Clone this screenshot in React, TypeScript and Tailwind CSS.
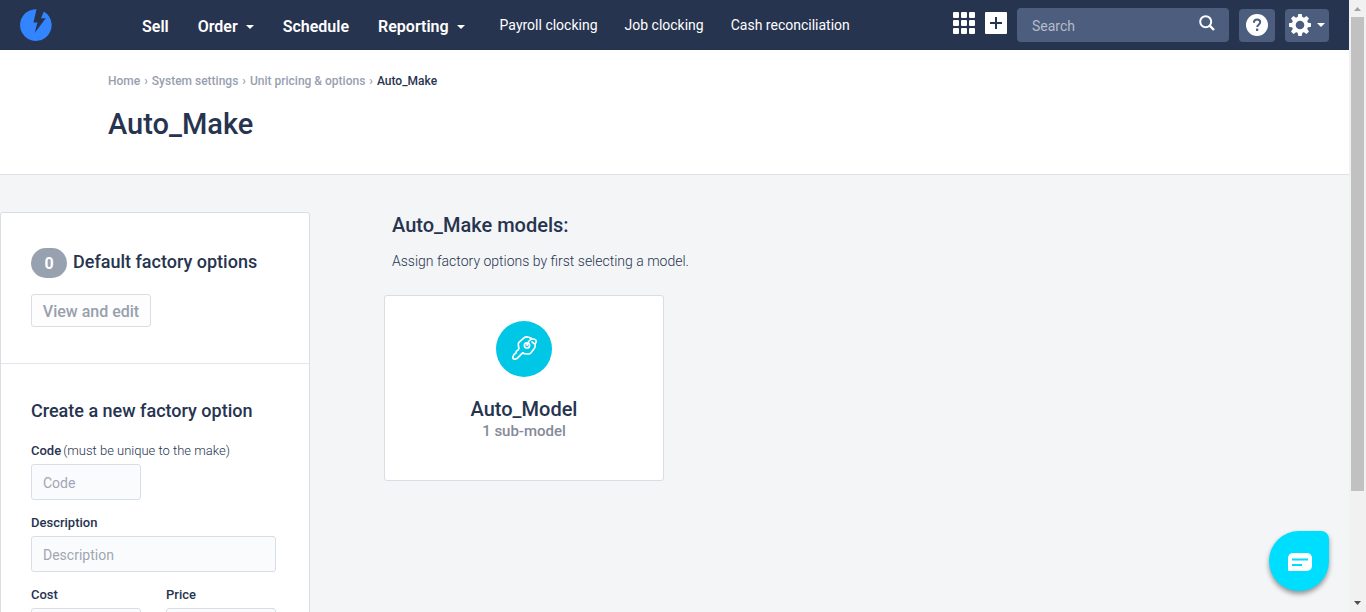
import type { ReactNode } from 'react';

function Caret() {
  return (
    <svg viewBox="0 0 8 4" className="h-1 w-2" fill="currentColor" aria-hidden="true">
      <path d="M0 0h8L4 4z" />
    </svg>
  );
}

function Logo() {
  return (
    <svg viewBox="0 0 32 32" className="size-8" aria-hidden="true">
      <path
        fill="#3384ff"
        d="M16.5.3 13.5 13.4h4L14.6 24 25.8 9.3h-4.8l2.9-6.8A15.8 15.8 0 1 1 16.5.3z"
      />
    </svg>
  );
}

function KeyIcon() {
  return (
    <svg
      viewBox="0 0 28 28"
      className="size-7"
      fill="none"
      stroke="#fff"
      strokeWidth="1.7"
      strokeLinejoin="round"
      strokeLinecap="round"
      aria-hidden="true"
    >
      <path d="M21.4 3.4 18.6 2.2Q16 1.2 14 2.9L9.4 6.9Q8 8.2 8.3 10L8.9 13.4 8.2 14.9 6.4 16.1 5.9 18 3.8 19.7 2.9 22Q2.6 24.4 5 24.2L7.2 23.4 12.6 17.9 14.4 18.6 18 19Q19.8 19.1 21 17.7L24.6 12.9Q25.6 11.4 25.2 9.4" />
      <circle cx="17" cy="10.4" r="2.6" />
      <path d="M17 10.2C17.8 6.4 20.6 3.8 23.6 4 26.6 4.4 27 7 25.2 8.6" />
      <path d="M22 6.8 24 8.6" />
    </svg>
  );
}

function MenuLink({ children, caret }: { children: ReactNode; caret?: boolean }) {
  return (
    <a href="#" className="flex items-center gap-2 text-base leading-5 font-semibold">
      {children}
      {caret && <Caret />}
    </a>
  );
}

function TopBar() {
  return (
    <header className="flex h-[50px] shrink-0 items-center bg-[#27344f] px-5 text-white">
      <a href="#" aria-label="Home page">
        <Logo />
      </a>
      <nav className="ml-[90px] flex items-center gap-[29px] pt-1 whitespace-nowrap">
        <MenuLink>Sell</MenuLink>
        <MenuLink caret>Order</MenuLink>
        <MenuLink>Schedule</MenuLink>
        <MenuLink caret>Reporting</MenuLink>
      </nav>
      <nav className="ml-[35px] flex items-center gap-[27px] text-sm whitespace-nowrap">
        <a href="#">Payroll clocking</a>
        <a href="#">Job clocking</a>
        <a href="#">Cash reconciliation</a>
      </nav>
      <div className="ml-auto flex items-center gap-[10px]">
        <button type="button" aria-label="Apps" className="mb-1">
          <svg viewBox="0 0 22 22" className="size-[22px]" fill="#fff" aria-hidden="true">
            {[0, 8, 16].map((y) =>
              [0, 8, 16].map((x) => <rect key={`${x}-${y}`} x={x} y={y} width="6" height="6" rx="1" />),
            )}
          </svg>
        </button>
        <button type="button" aria-label="Add" className="mb-1">
          <svg viewBox="0 0 22 22" className="size-[22px]" aria-hidden="true">
            <rect width="22" height="22" rx="1" fill="#fff" />
            <path d="M11 5v12M5 11h12" stroke="#27344f" strokeWidth="2" />
          </svg>
        </button>
        <div className="flex h-[34px] w-[212px] items-center rounded bg-[#4d5d7e] pr-[14px] pl-[15px]">
          <input
            aria-label="Search"
            placeholder="Search"
            className="min-w-0 flex-1 bg-transparent pt-[2px] text-sm outline-none placeholder:text-[#b5bbc9]"
          />
          <button type="button" aria-label="Submit search" className="mb-1">
            <svg viewBox="0 0 16 16" className="size-4" fill="none" stroke="#fff" strokeWidth="2" aria-hidden="true">
              <circle cx="6.7" cy="6.7" r="5.5" />
              <path d="m10.7 10.7 4.3 4.3" strokeWidth="2.4" />
            </svg>
          </button>
        </div>
        <button type="button" aria-label="Help" className="flex h-[33px] w-9 items-center justify-center rounded bg-[#4d5d7e]">
          <svg viewBox="0 0 22 22" className="size-[22px]" aria-hidden="true">
            <circle cx="11" cy="11" r="11" fill="#fff" />
            <path d="M7.9 8.7C8 6.600 9.3 5.6 11.1 5.6c1.900 0 3.100 1.100 3.100 2.700 0 2.300-3 2.500-3 4.700" fill="none" stroke="#4d5d7e" strokeWidth="2" />
            <rect x="10" y="14.6" width="2.3" height="2.3" fill="#4d5d7e" />
          </svg>
        </button>
        <button type="button" aria-label="Settings" className="flex h-[33px] w-11 items-center justify-center gap-[6px] rounded bg-[#4d5d7e]">
          <svg viewBox="0 0 22 22" className="size-[22px]" aria-hidden="true">
            <g fill="#fff">
              {[0, 45, 90, 135].map((angle) => (
                <path key={angle} d="M9.3 0h3.4l.8 4v14l-.8 4H9.3l-.8-4V4z" transform={`rotate(${angle} 11 11)`} />
              ))}
              <circle cx="11" cy="11" r="8.2" />
            </g>
            <circle cx="11" cy="11" r="4.3" fill="#4d5d7e" />
          </svg>
          <Caret />
        </button>
      </div>
    </header>
  );
}

function Breadcrumbs() {
  return (
    <nav aria-label="Breadcrumb" className="flex gap-1 text-[12px] leading-4 font-medium text-[#98a0af]">
      <a href="#">Home</a>
      <span>›</span>
      <a href="#">System settings</a>
      <span>›</span>
      <a href="#">Unit pricing &amp; options</a>
      <span>›</span>
      <span className="text-[#27344f]">Auto_Make</span>
    </nav>
  );
}

function Field({ id, label, hint, placeholder, className }: {
  id: string;
  label: string;
  hint?: string;
  placeholder?: string;
  className: string;
}) {
  return (
    <div className={className}>
      <label htmlFor={id} className="block pt-[1px] pb-[3px] text-[13px] leading-5 font-medium whitespace-nowrap">
        {label}
        {hint && <span className="ml-[2px] font-light">{hint}</span>}
      </label>
      <input
        id={id}
        placeholder={placeholder}
        className="block h-9 w-full rounded-[3px] border border-[#d9dde6] bg-[#fafbfd] px-[11px] pt-[2px] text-sm outline-none placeholder:text-[#a0a6b3]"
      />
    </div>
  );
}

function FactoryOptions() {
  return (
    <aside className="w-[310px] shrink-0 rounded-[3px] border border-[#d9dde6] bg-white pb-8">
      <section className="border-b border-[#e3e6ec] px-[30px] pt-[35px] pb-9">
        <div className="flex items-start gap-[6px]">
          <span className="flex h-[30px] w-9 items-center justify-center rounded-full bg-[#98a1b0] pt-[2px] text-base font-bold text-white">0</span>
          <h2 className="text-lg leading-7 font-medium">Default factory options</h2>
        </div>
        <button
          type="button"
          className="mt-4 h-[33px] w-[120px] rounded-[3px] border border-[#d9dde6] bg-[#fdfdfd] pt-[2px] text-base leading-6 font-medium text-[#989fae]"
        >
          View and edit
        </button>
      </section>
      <form className="px-[30px] pt-[35px]">
        <h2 className="text-lg leading-6 font-medium">Create a new factory option</h2>
        <div className="mt-[17px] flex flex-col gap-3">
          <Field id="code" label="Code" hint="(must be unique to the make)" placeholder="Code" className="w-[110px]" />
          <Field id="description" label="Description" placeholder="Description" className="w-[245px]" />
          <div className="flex gap-[25px]">
            <Field id="cost" label="Cost" className="w-[110px]" />
            <Field id="price" label="Price" className="w-[110px]" />
          </div>
        </div>
      </form>
    </aside>
  );
}

function Models() {
  return (
    <section className="ml-[74px] flex-1">
      <div className="pt-[1px] pl-2">
        <h2 className="text-xl leading-6 font-medium">Auto_Make models:</h2>
        <p className="mt-[14px] text-sm leading-5 font-light">Assign factory options by first selecting a model.</p>
      </div>
      <a href="#" className="mt-6 flex h-[186px] w-[280px] flex-col items-center rounded-[3px] border border-[#d9dde6] bg-white pt-[25px]">
        <span className="flex size-14 items-center justify-center rounded-full bg-[#00c7e6]">
          <KeyIcon />
        </span>
        <span className="mt-5 text-xl leading-6 font-medium">Auto_Model</span>
        <span className="text-[15px] leading-5 font-medium text-[#858a99]">1 sub-model</span>
      </a>
    </section>
  );
}

function ChatButton() {
  return (
    <button
      type="button"
      aria-label="Open chat"
      className="absolute right-5 bottom-[21px] flex size-[60px] items-center justify-center rounded-[30px] rounded-tr-[8px] bg-[#00deff] pl-[2px] shadow-[0_3px_5px_rgba(0,0,0,0.4)]"
    >
      <svg viewBox="0 0 24 18" className="mt-[2px] h-[18px] w-6" aria-hidden="true">
        <path d="M5 0h14a5 5 0 0 1 5 5v8a5 5 0 0 1-5 5H1a1 1 0 0 1-1-1V5a5 5 0 0 1 5-5z" fill="#fff" />
        <path d="M4 6.5h16M4 12h10" stroke="#00deff" strokeWidth="2" />
      </svg>
    </button>
  );
}

function ScrollRail() {
  return (
    <div className="flex w-[17px] shrink-0 flex-col items-center bg-[#f1f1f1]" aria-hidden="true">
      <svg viewBox="0 0 17 17" className="size-[17px] shrink-0">
        <path d="M5 11h7L8.500 7z" fill="#a3a3a3" />
      </svg>
      <div className="min-h-0 w-full flex-1 px-[2px]">
        <div className="h-[82%] bg-[#c1c1c1]" />
      </div>
      <svg viewBox="0 0 17 17" className="size-[17px] shrink-0">
        <path d="M5 6h7L8.500 10z" fill="#505050" />
      </svg>
    </div>
  );
}

export default function App() {
  return (
    <div className="flex h-screen overflow-hidden bg-[#f4f5f7] font-['Roboto',sans-serif] text-[#27344f]">
      <div className="relative flex min-w-0 flex-1 flex-col overflow-hidden">
        <TopBar />
        <div className="shrink-0 border-b border-[#dfe2e8] bg-white px-[108px] pt-[23px] pb-[30px]">
          <Breadcrumbs />
          <h1 className="mt-[15px] text-[29px] leading-10 font-medium">Auto_Make</h1>
        </div>
        <main className="flex items-start pt-[37px]">
          <FactoryOptions />
          <Models />
        </main>
        <ChatButton />
      </div>
      <ScrollRail />
    </div>
  );
}
